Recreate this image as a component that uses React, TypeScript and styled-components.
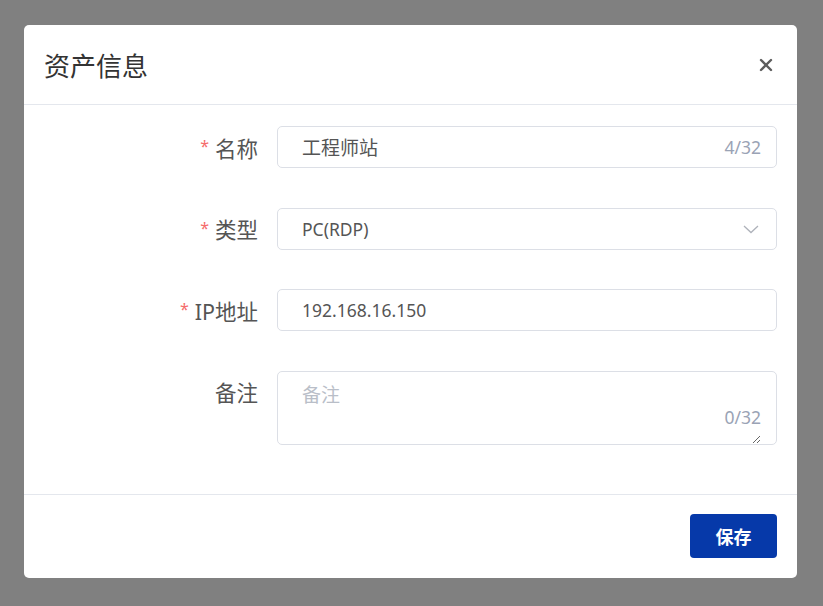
import React from "react";
import styled, { createGlobalStyle } from "styled-components";

const GlobalStyle = createGlobalStyle`
  html, body {
    margin: 0;
    padding: 0;
    background: #808080;
    font-family: "Noto Sans", "Noto Sans CJK SC", sans-serif;
  }
  * {
    box-sizing: border-box;
  }
`;

const Overlay = styled.div`
  width: 823px;
  height: 606px;
  display: flex;
  align-items: flex-start;
  justify-content: flex-start;
  padding: 25px 0 0 24px;
  background: #808080;
`;

const Dialog = styled.div`
  width: 773px;
  background: #ffffff;
  border-radius: 5px;
  display: flex;
  flex-direction: column;
`;

const DialogHeader = styled.div`
  height: 80px;
  padding: 0 22px 0 20px;
  display: flex;
  align-items: center;
  justify-content: space-between;
  border-bottom: 1px solid #e4e7ed;
`;

const Title = styled.h2`
  margin: 0;
  font-size: 26px;
  font-weight: 400;
  color: #333333;
`;

const CloseButton = styled.button`
  border: none;
  background: none;
  padding: 0;
  width: 18px;
  height: 18px;
  display: flex;
  align-items: center;
  justify-content: center;
  color: #5c5c5c;
  cursor: pointer;
`;

const Body = styled.div`
  padding: 21px 20px 49px 20px;
  display: flex;
  flex-direction: column;
  gap: 39.5px;
`;

const Row = styled.div`
  display: grid;
  grid-template-columns: 214px 500px;
  column-gap: 19px;
  align-items: start;
`;

const Label = styled.label`
  height: 42px;
  display: flex;
  align-items: center;
  justify-content: flex-end;
  font-size: 21.5px;
  color: #555555;
`;

const Star = styled.span`
  color: #f56c6c;
  font-size: 16px;
  margin-right: 6px;
  position: relative;
  top: -1px;
`;

const Field = styled.div<{ $tall?: boolean }>`
  position: relative;
  height: ${({ $tall }) => ($tall ? "74px" : "42px")};
  border: 1px solid #dcdfe6;
  border-radius: 5px;
  display: flex;
  align-items: center;
  padding: 0 15px 0 24px;
  background: #ffffff;
`;

const TextInput = styled.input<{ $latin?: boolean }>`
  flex: 1;
  border: none;
  outline: none;
  background: transparent;
  padding: 0;
  font-family: inherit;
  font-size: ${({ $latin }) => ($latin ? "17.5px" : "19px")};
  color: #555555;
`;

const Counter = styled.span`
  font-size: 17.5px;
  color: #9aa3b5;
`;

const SelectValue = styled.span`
  flex: 1;
  font-size: 17.5px;
  color: #555555;
`;

const Chevron = styled.svg`
  width: 18px;
  height: 18px;
  margin-right: 1px;
  color: #aeb2ba;
`;

const TextArea = styled.textarea`
  width: 100%;
  height: 100%;
  border: none;
  outline: none;
  resize: both;
  padding: 8px 0 0 0;
  font-family: inherit;
  font-size: 19px;
  color: #555555;
  background: transparent;

  &::placeholder {
    color: #b9bec8;
  }
`;

const AreaCounter = styled(Counter)`
  position: absolute;
  right: 15px;
  bottom: 15px;
`;

const Footer = styled.div`
  height: 84px;
  padding: 0 20px;
  border-top: 1px solid #e4e7ed;
  display: flex;
  align-items: center;
  justify-content: flex-end;
`;

const PrimaryButton = styled.button`
  width: 87px;
  height: 44px;
  border: none;
  border-radius: 4px;
  background: #0639a9;
  color: #ffffff;
  font-family: inherit;
  font-size: 18px;
  font-weight: 700;
  cursor: pointer;
`;

const App = () => {
  return (
    <>
      <GlobalStyle />
      <Overlay>
        <Dialog>
          <DialogHeader>
            <Title>资产信息</Title>
            <CloseButton aria-label="关闭">
              <svg width="14" height="14" viewBox="0 0 14 14">
                <path
                  d="M2 2 L12 12 M12 2 L2 12"
                  stroke="currentColor"
                  strokeWidth="2.4"
                  strokeLinecap="round"
                />
              </svg>
            </CloseButton>
          </DialogHeader>
          <Body>
            <Row>
              <Label>
                <Star>*</Star>名称
              </Label>
              <Field>
                <TextInput defaultValue="工程师站" />
                <Counter>4/32</Counter>
              </Field>
            </Row>
            <Row>
              <Label>
                <Star>*</Star>类型
              </Label>
              <Field>
                <SelectValue>PC(RDP)</SelectValue>
                <Chevron viewBox="0 0 18 18">
                  <path
                    d="M2 6 L9 12.5 L16 6"
                    fill="none"
                    stroke="currentColor"
                    strokeWidth="1.3"
                  />
                </Chevron>
              </Field>
            </Row>
            <Row>
              <Label>
                <Star>*</Star>IP地址
              </Label>
              <Field>
                <TextInput $latin defaultValue="192.168.16.150" />
              </Field>
            </Row>
            <Row>
              <Label>备注</Label>
              <Field $tall>
                <TextArea placeholder="备注" />
                <AreaCounter>0/32</AreaCounter>
              </Field>
            </Row>
          </Body>
          <Footer>
            <PrimaryButton>保存</PrimaryButton>
          </Footer>
        </Dialog>
      </Overlay>
    </>
  );
};

export default App;
